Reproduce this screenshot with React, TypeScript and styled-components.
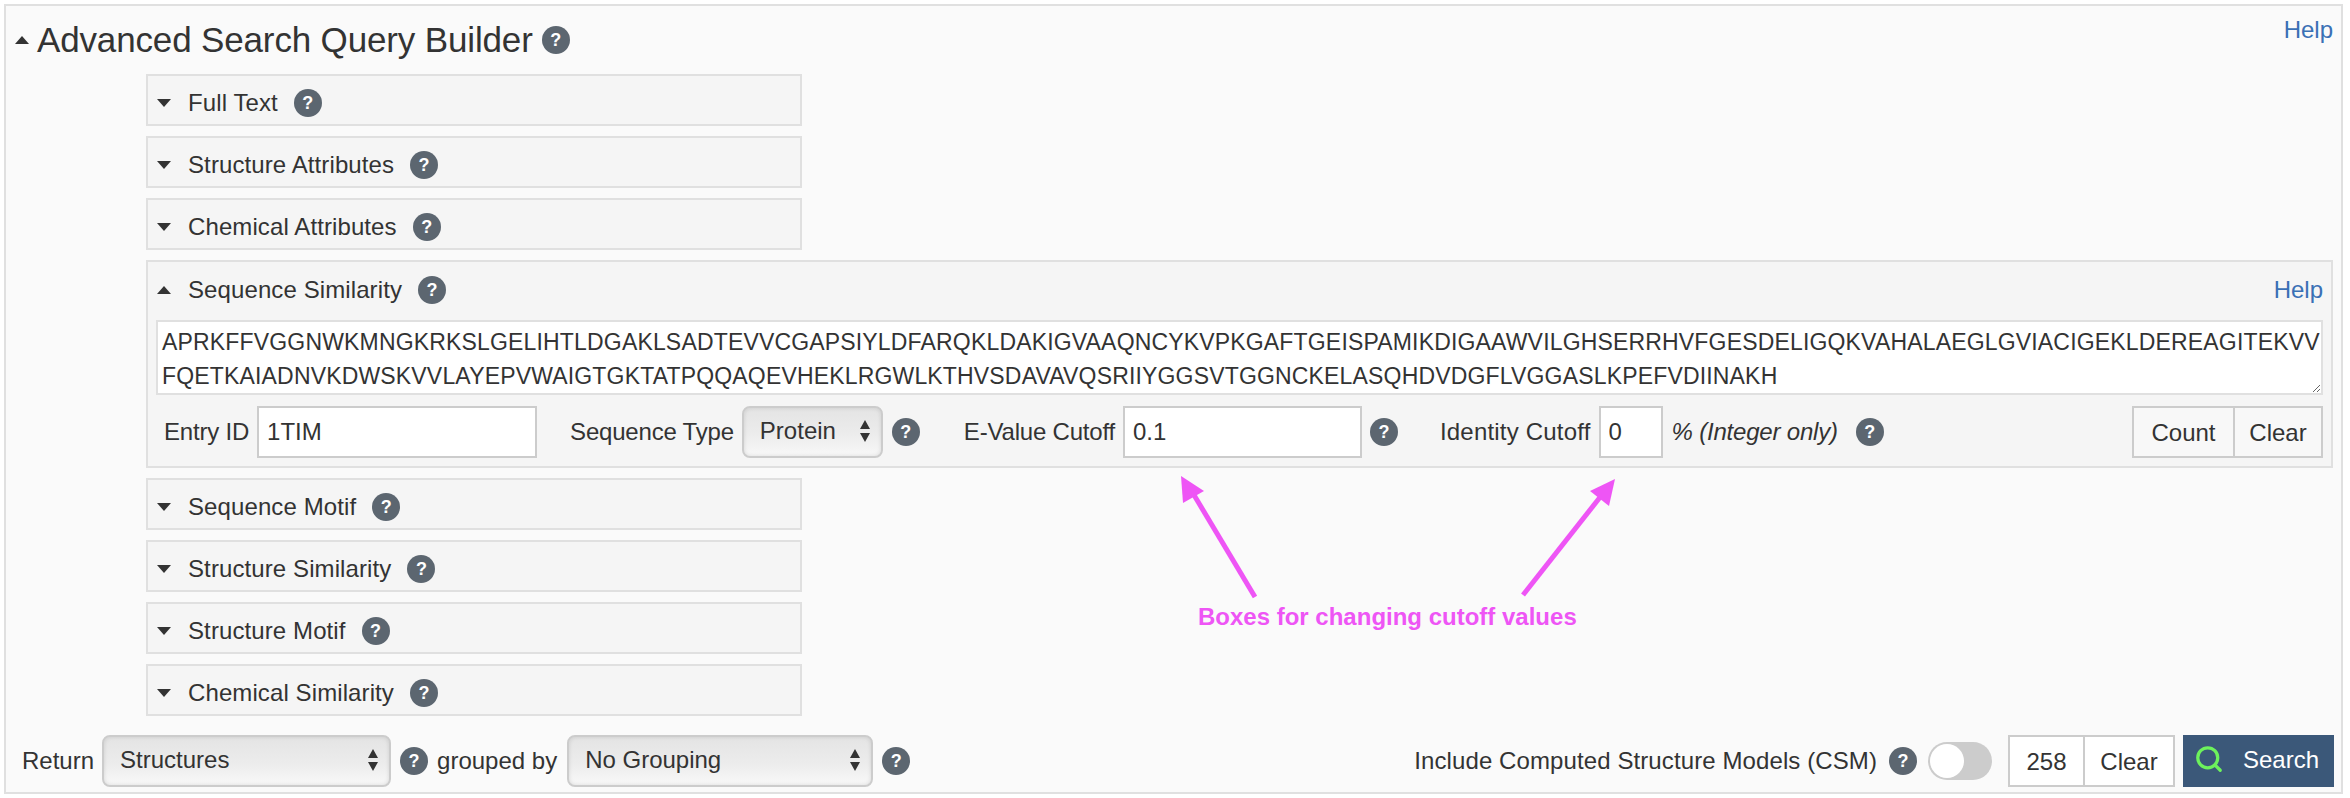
import React from 'react'
import styled, { createGlobalStyle } from 'styled-components'
import { Search } from 'lucide-react'

const GlobalStyle = createGlobalStyle`
  html, body {
    margin: 0;
    padding: 0;
    background: #fff;
    color: #333;
    font-family: 'Liberation Sans', Arial, sans-serif;
  }
`

const SEQUENCE =
  'APRKFFVGGNWKMNGKRKSLGELIHTLDGAKLSADTEVVCGAPSIYLDFARQKLDAKIGVAAQNCYKVPKGAFTGEISPAMIKDIGAAWVILGHSERRHVFGESDELIGQKVAHALAEGLGVIACIGEKLDEREAGITEKVV\n' +
  'FQETKAIADNVKDWSKVVLAYEPVWAIGTGKTATPQQAQEVHEKLRGWLKTHVSDAVAVQSRIIYGGSVTGGNCKELASQHDVDGFLVGGASLKPEFVDIINAKH'

const Help = () => <HelpIcon>?</HelpIcon>

const Section = ({ title }: { title: string }) => (
  <Collapsed>
    <Caret />
    <SectionTitle>{title}</SectionTitle>
    <Help />
  </Collapsed>
)

const Picker = ({ value, width }: { value: string; width: number }) => (
  <PickerWrap $width={width}>
    <PickerSelect defaultValue={value}>
      <option>{value}</option>
    </PickerSelect>
    <PickerArrows viewBox="0 0 12 22" aria-hidden="true">
      <path d="M6 0l5 9H1zM6 22l-5-9h10z" fill="#333" />
    </PickerArrows>
  </PickerWrap>
)

export default function App() {
  return (
    <Page>
      <GlobalStyle />
      <Builder>
        <TitleRow>
          <Caret $up $small />
          <Title>Advanced Search Query Builder</Title>
          <Help />
          <TopLink href="#">Help</TopLink>
        </TitleRow>

        <Sections>
          <Section title="Full Text" />
          <Section title="Structure Attributes" />
          <Section title="Chemical Attributes" />

          <Expanded>
            <ExpandedHeader>
              <Caret $up />
              <SectionTitle>Sequence Similarity</SectionTitle>
              <Help />
              <PanelLink href="#">Help</PanelLink>
            </ExpandedHeader>
            <SequenceBox defaultValue={SEQUENCE} spellCheck={false} />
            <Controls>
              <Label $left={8}>Entry ID</Label>
              <TextInput $width={280} defaultValue="1TIM" />
              <Label $left={25}>Sequence Type</Label>
              <Picker value="Protein" width={141} />
              <Help />
              <Label $left={44}>E-Value Cutoff</Label>
              <TextInput $width={239} defaultValue="0.1" />
              <Help />
              <Label $left={42} $spacing={0.2}>Identity Cutoff</Label>
              <TextInput $width={64} defaultValue="0" />
              <Note>% (Integer only)</Note>
              <Help />
              <Buttons>
                <PlainButton $width={103}>Count</PlainButton>
                <PlainButton $width={90}>Clear</PlainButton>
              </Buttons>
            </Controls>
          </Expanded>

          <Section title="Sequence Motif" />
          <Section title="Structure Similarity" />
          <Section title="Structure Motif" />
          <Section title="Chemical Similarity" />
        </Sections>

        <BottomBar>
          <BarLabel $right={8}>Return</BarLabel>
          <Picker value="Structures" width={289} />
          <Help />
          <BarLabel $left={9}>grouped by</BarLabel>
          <Picker value="No Grouping" width={306} />
          <Help />
          <BarRight>
            <BarLabel $right={12} $spacing={0.1}>
              Include Computed Structure Models (CSM)
            </BarLabel>
            <Help />
            <Toggle>
              <Knob />
            </Toggle>
            <Buttons>
              <PlainButton $width={77} $white>258</PlainButton>
              <PlainButton $width={92} $white>Clear</PlainButton>
            </Buttons>
            <SearchButton>
              <SearchIcon size={30} strokeWidth={2.6} color="#6df25c" />
              Search
            </SearchButton>
          </BarRight>
        </BottomBar>
      </Builder>

      <Arrows viewBox="0 0 2350 798" aria-hidden="true">
        <path d="M1255 597L1194 495" stroke="#ee55f5" strokeWidth="5" />
        <path d="M1181 476l23 15-21 12z" fill="#ee55f5" />
        <path d="M1523 595L1601 496" stroke="#ee55f5" strokeWidth="5" />
        <path d="M1615 479l-25 12 19 15z" fill="#ee55f5" />
      </Arrows>
      <Annotation>Boxes for changing cutoff values</Annotation>
    </Page>
  )
}

const Page = styled.div`
  position: relative;
  width: 2350px;
  height: 798px;
  padding: 4px 7px 4px 4px;
  box-sizing: border-box;
  overflow: hidden;
`

const Builder = styled.div`
  height: 790px;
  box-sizing: border-box;
  display: flex;
  flex-direction: column;
  border: 2px solid #e0e0e0;
  background: #fafafa;
`

const TitleRow = styled.div`
  height: 68px;
  flex: none;
  display: flex;
  align-items: center;
  padding: 0 8px 0 9px;
  box-sizing: border-box;
`

const Title = styled.h1`
  margin: 0 9px 0 8px;
  font-size: 35px;
  font-weight: 400;
  letter-spacing: -0.15px;
  color: #333;
`

const TopLink = styled.a`
  margin: 0 0 20px auto;
  font-size: 24px;
  color: #3a70b5;
  text-decoration: none;
`

const Sections = styled.div`
  display: flex;
  flex-direction: column;
  gap: 10px;
  padding: 0 8px 0 140px;
`

const Collapsed = styled.div`
  width: 656px;
  height: 52px;
  box-sizing: border-box;
  display: flex;
  align-items: center;
  padding: 5px 0 0 9px;
  border: 2px solid #e0e0e0;
  background: #f5f5f5;
`

const Expanded = styled.div`
  height: 208px;
  box-sizing: border-box;
  display: flex;
  flex-direction: column;
  padding: 0 8px;
  border: 2px solid #e0e0e0;
  background: #f5f5f5;
`

const ExpandedHeader = styled.div`
  height: 58px;
  flex: none;
  box-sizing: border-box;
  display: flex;
  align-items: center;
  padding: 0 0 3px 1px;
`

const Caret = styled.span<{ $up?: boolean; $small?: boolean }>`
  flex: none;
  width: 0;
  height: 0;
  border-left: 7px solid transparent;
  border-right: 7px solid transparent;
  ${p =>
    p.$up
      ? 'border-bottom: 8px solid #333;'
      : 'border-top: 8px solid #333;'}
  margin-right: ${p => (p.$small ? '0' : '17px')};
`

const SectionTitle = styled.span`
  font-size: 24px;
  color: #333;
  margin-right: 16px;
  letter-spacing: 0.1px;
`

const HelpIcon = styled.span`
  flex: none;
  width: 28px;
  height: 28px;
  border-radius: 50%;
  background: #5c6670;
  color: #fff;
  font-size: 18px;
  font-weight: 700;
  line-height: 28px;
  text-align: center;
`

const PanelLink = styled.a`
  margin-left: auto;
  font-size: 24px;
  color: #3a70b5;
  text-decoration: none;
`

const SequenceBox = styled.textarea`
  flex: none;
  height: 75px;
  box-sizing: border-box;
  width: 100%;
  margin: 0;
  padding: 3px 0 3px 4px;
  border: 2px solid #e0e0e0;
  background: #fff;
  color: #333;
  font-family: 'Liberation Sans', Arial, sans-serif;
  font-size: 23px;
  letter-spacing: 0.17px;
  line-height: 34px;
  outline: none;
  overflow: hidden;
  resize: vertical;
  white-space: pre-wrap;
`

const Controls = styled.div`
  margin-top: 11px;
  display: flex;
  align-items: center;
`

const Label = styled.span<{ $left: number; $spacing?: number }>`
  margin: 0 8px 0 ${p => p.$left}px;
  font-size: 24px;
  letter-spacing: ${p => p.$spacing ?? -0.2}px;
  color: #333;
`

const TextInput = styled.input<{ $width: number }>`
  flex: none;
  width: ${p => p.$width}px;
  height: 52px;
  box-sizing: border-box;
  margin-right: 8px;
  padding: 0 8px;
  border: 2px solid #ccc;
  background: #fff;
  color: #333;
  font-family: 'Liberation Sans', Arial, sans-serif;
  font-size: 24px;
  outline: none;
`

const PickerWrap = styled.div<{ $width: number }>`
  position: relative;
  flex: none;
  width: ${p => p.$width}px;
  height: 52px;
  margin-right: 9px;
`

const PickerSelect = styled.select`
  appearance: none;
  width: 100%;
  height: 100%;
  box-sizing: border-box;
  padding: 0 0 3px 16px;
  border: 2px solid #ccc;
  border-radius: 8px;
  background: linear-gradient(#e4e4e4, #ececec 55%, #f8f8f8);
  box-shadow: inset 0 0 4px rgba(0, 0, 0, 0.12);
  color: #333;
  font-family: 'Liberation Sans', Arial, sans-serif;
  font-size: 24px;
  outline: none;
`

const PickerArrows = styled.svg`
  position: absolute;
  right: 12px;
  top: 14px;
  width: 12px;
  height: 22px;
  pointer-events: none;
`

const Note = styled.em`
  margin: 0 18px 0 1px;
  font-size: 24px;
  letter-spacing: -0.2px;
  color: #333;
`

const Buttons = styled.div`
  margin-left: auto;
  flex: none;
  display: flex;
`

const PlainButton = styled.button<{ $width: number; $white?: boolean }>`
  width: ${p => p.$width}px;
  height: 52px;
  box-sizing: border-box;
  padding: 2px 0 0;
  border: 2px solid #ccc;
  background: ${p => (p.$white ? '#fff' : '#f8f8f8')};
  color: #333;
  font-family: 'Liberation Sans', Arial, sans-serif;
  font-size: 24px;

  & + & {
    margin-left: -2px;
  }
`

const BottomBar = styled.div`
  margin-top: 19px;
  height: 52px;
  flex: none;
  display: flex;
  align-items: center;
  padding: 0 7px 0 16px;
`

const BarLabel = styled.span<{ $left?: number; $right?: number; $spacing?: number }>`
  margin: 0 ${p => p.$right ?? 10}px 0 ${p => p.$left ?? 0}px;
  font-size: 24px;
  letter-spacing: ${p => p.$spacing ?? 0}px;
  color: #333;
`

const BarRight = styled.div`
  margin-left: auto;
  display: flex;
  align-items: center;
`

const Toggle = styled.div`
  flex: none;
  width: 64px;
  height: 38px;
  box-sizing: border-box;
  margin: 0 16px 0 11px;
  padding: 2px;
  border-radius: 19px;
  background: #ccc;
`

const Knob = styled.div`
  width: 34px;
  height: 34px;
  border-radius: 50%;
  background: #fff;
`

const SearchButton = styled.button`
  flex: none;
  width: 151px;
  height: 52px;
  margin-left: 8px;
  display: flex;
  align-items: center;
  gap: 19px;
  padding: 0 0 2px 11px;
  box-sizing: border-box;
  border: 0;
  background: #3b5879;
  color: #fff;
  font-family: 'Liberation Sans', Arial, sans-serif;
  font-size: 24px;
`

const SearchIcon = styled(Search)`
  flex: none;
  margin-bottom: 2px;
`

const Arrows = styled.svg`
  position: absolute;
  left: 0;
  top: 0;
  width: 2350px;
  height: 798px;
  pointer-events: none;
`

const Annotation = styled.span`
  position: absolute;
  left: 1198px;
  top: 603px;
  font-size: 24px;
  font-weight: 700;
  color: #ee55f5;
  white-space: nowrap;
`
